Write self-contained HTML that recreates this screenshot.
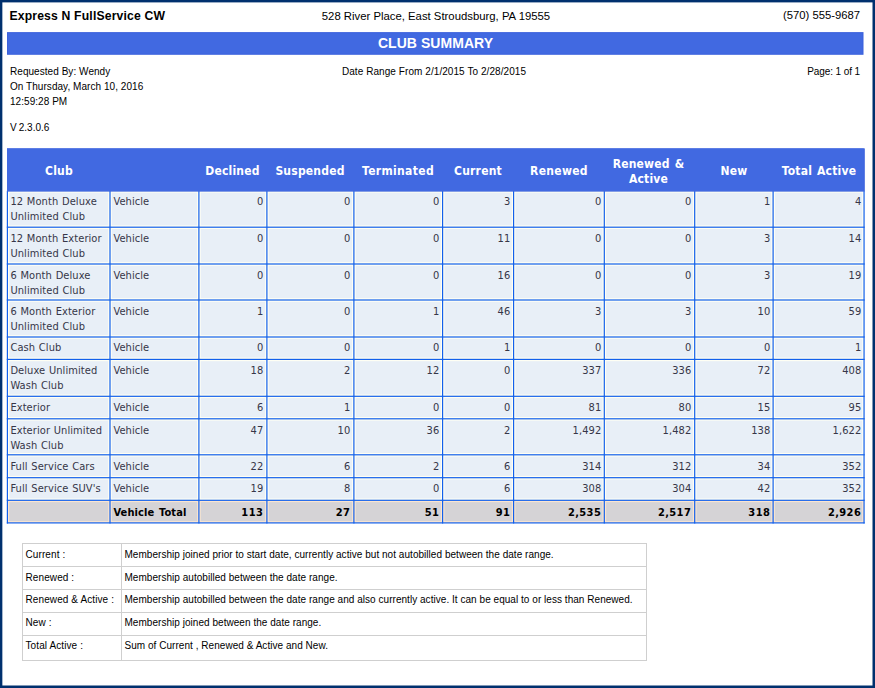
<!DOCTYPE html>
<html lang="en">
<head>
<meta charset="utf-8">
<title>Club Summary</title>
<style>
html,body{margin:0;padding:0;background:#fff;}
body{width:875px;height:688px;position:relative;overflow:hidden;font-family:"Liberation Sans",sans-serif;color:#000;}
#bg{position:absolute;left:0;top:0;width:875px;height:688px;}
.abs{position:absolute;white-space:nowrap;}
#title{left:9.4px;top:9px;font-weight:bold;font-size:12.2px;line-height:15px;letter-spacing:0.17px;}
#addr{left:236px;width:400px;top:9px;text-align:center;font-size:11.33px;line-height:15px;}
#phone{right:15px;top:8px;text-align:right;font-size:11.28px;line-height:15px;}
#bar{left:7px;top:33px;width:857px;height:22px;color:#fff;text-align:center;font-weight:bold;font-size:14px;line-height:20px;letter-spacing:0.05px;}
.sm{font-size:10px;line-height:15px;}
#req{left:10px;top:64px;letter-spacing:0.05px;}
#ver{left:10px;top:120px;word-spacing:-0.7px;}
#range{left:234px;width:400px;top:64px;text-align:center;letter-spacing:0.07px;}
#page{right:15px;top:64px;text-align:right;letter-spacing:-0.1px;}
.th{position:absolute;top:150px;height:43px;display:flex;align-items:center;justify-content:center;text-align:center;color:#fff;font-family:"DejaVu Sans Condensed","DejaVu Sans",sans-serif;font-weight:bold;font-size:12px;line-height:15px;letter-spacing:0.2px;word-spacing:1px;}
.c{position:absolute;box-sizing:border-box;font-family:"DejaVu Sans Condensed","DejaVu Sans",sans-serif;font-size:11px;line-height:15px;letter-spacing:0.08px;word-spacing:0.5px;color:#363648;padding:3px 3.7px 0 3.4px;white-space:nowrap;overflow:hidden;}
.n{text-align:right;}
.g{display:contents;}
.t{font-weight:bold;font-size:11px;letter-spacing:0.12px;word-spacing:1px;color:#000;}
.t.n{letter-spacing:0.4px;padding-right:3.8px;}
.l{position:absolute;box-sizing:border-box;border:1px solid #cfcfcf;background:#fff;font-size:10px;line-height:15px;padding:3px 0 0 2.5px;white-space:nowrap;overflow:hidden;color:#000;}
</style>
</head>
<body>
<svg id="bg" width="875" height="688" viewBox="0 0 875 688">
<rect x="7.00" y="32.10" width="856.50" height="22.70" fill="#3b61dc"/>
<rect x="8.00" y="33.10" width="854.50" height="20.70" fill="#4169e1"/>
<rect x="7.40" y="190.80" width="856.65" height="309.50" fill="#fffff4"/>
<rect x="7.40" y="500.30" width="856.65" height="22.60" fill="#fbe5cf"/>
<rect x="9.20" y="192.60" width="99.00" height="32.80" fill="#e8eff7"/>
<rect x="111.80" y="192.60" width="85.30" height="32.80" fill="#e8eff7"/>
<rect x="200.70" y="192.60" width="64.40" height="32.80" fill="#e8eff7"/>
<rect x="268.70" y="192.60" width="83.40" height="32.80" fill="#e8eff7"/>
<rect x="355.70" y="192.60" width="85.10" height="32.80" fill="#e8eff7"/>
<rect x="444.40" y="192.60" width="67.40" height="32.80" fill="#e8eff7"/>
<rect x="515.40" y="192.60" width="87.10" height="32.80" fill="#e8eff7"/>
<rect x="606.10" y="192.60" width="86.80" height="32.80" fill="#e8eff7"/>
<rect x="696.50" y="192.60" width="74.80" height="32.80" fill="#e8eff7"/>
<rect x="774.90" y="192.60" width="87.35" height="32.80" fill="#e8eff7"/>
<rect x="9.20" y="229.00" width="99.00" height="33.20" fill="#e8eff7"/>
<rect x="111.80" y="229.00" width="85.30" height="33.20" fill="#e8eff7"/>
<rect x="200.70" y="229.00" width="64.40" height="33.20" fill="#e8eff7"/>
<rect x="268.70" y="229.00" width="83.40" height="33.20" fill="#e8eff7"/>
<rect x="355.70" y="229.00" width="85.10" height="33.20" fill="#e8eff7"/>
<rect x="444.40" y="229.00" width="67.40" height="33.20" fill="#e8eff7"/>
<rect x="515.40" y="229.00" width="87.10" height="33.20" fill="#e8eff7"/>
<rect x="606.10" y="229.00" width="86.80" height="33.20" fill="#e8eff7"/>
<rect x="696.50" y="229.00" width="74.80" height="33.20" fill="#e8eff7"/>
<rect x="774.90" y="229.00" width="87.35" height="33.20" fill="#e8eff7"/>
<rect x="9.20" y="265.80" width="99.00" height="32.40" fill="#e8eff7"/>
<rect x="111.80" y="265.80" width="85.30" height="32.40" fill="#e8eff7"/>
<rect x="200.70" y="265.80" width="64.40" height="32.40" fill="#e8eff7"/>
<rect x="268.70" y="265.80" width="83.40" height="32.40" fill="#e8eff7"/>
<rect x="355.70" y="265.80" width="85.10" height="32.40" fill="#e8eff7"/>
<rect x="444.40" y="265.80" width="67.40" height="32.40" fill="#e8eff7"/>
<rect x="515.40" y="265.80" width="87.10" height="32.40" fill="#e8eff7"/>
<rect x="606.10" y="265.80" width="86.80" height="32.40" fill="#e8eff7"/>
<rect x="696.50" y="265.80" width="74.80" height="32.40" fill="#e8eff7"/>
<rect x="774.90" y="265.80" width="87.35" height="32.40" fill="#e8eff7"/>
<rect x="9.20" y="301.80" width="99.00" height="33.40" fill="#e8eff7"/>
<rect x="111.80" y="301.80" width="85.30" height="33.40" fill="#e8eff7"/>
<rect x="200.70" y="301.80" width="64.40" height="33.40" fill="#e8eff7"/>
<rect x="268.70" y="301.80" width="83.40" height="33.40" fill="#e8eff7"/>
<rect x="355.70" y="301.80" width="85.10" height="33.40" fill="#e8eff7"/>
<rect x="444.40" y="301.80" width="67.40" height="33.40" fill="#e8eff7"/>
<rect x="515.40" y="301.80" width="87.10" height="33.40" fill="#e8eff7"/>
<rect x="606.10" y="301.80" width="86.80" height="33.40" fill="#e8eff7"/>
<rect x="696.50" y="301.80" width="74.80" height="33.40" fill="#e8eff7"/>
<rect x="774.90" y="301.80" width="87.35" height="33.40" fill="#e8eff7"/>
<rect x="9.20" y="338.80" width="99.00" height="18.80" fill="#e8eff7"/>
<rect x="111.80" y="338.80" width="85.30" height="18.80" fill="#e8eff7"/>
<rect x="200.70" y="338.80" width="64.40" height="18.80" fill="#e8eff7"/>
<rect x="268.70" y="338.80" width="83.40" height="18.80" fill="#e8eff7"/>
<rect x="355.70" y="338.80" width="85.10" height="18.80" fill="#e8eff7"/>
<rect x="444.40" y="338.80" width="67.40" height="18.80" fill="#e8eff7"/>
<rect x="515.40" y="338.80" width="87.10" height="18.80" fill="#e8eff7"/>
<rect x="606.10" y="338.80" width="86.80" height="18.80" fill="#e8eff7"/>
<rect x="696.50" y="338.80" width="74.80" height="18.80" fill="#e8eff7"/>
<rect x="774.90" y="338.80" width="87.35" height="18.80" fill="#e8eff7"/>
<rect x="9.20" y="361.20" width="99.00" height="33.30" fill="#e8eff7"/>
<rect x="111.80" y="361.20" width="85.30" height="33.30" fill="#e8eff7"/>
<rect x="200.70" y="361.20" width="64.40" height="33.30" fill="#e8eff7"/>
<rect x="268.70" y="361.20" width="83.40" height="33.30" fill="#e8eff7"/>
<rect x="355.70" y="361.20" width="85.10" height="33.30" fill="#e8eff7"/>
<rect x="444.40" y="361.20" width="67.40" height="33.30" fill="#e8eff7"/>
<rect x="515.40" y="361.20" width="87.10" height="33.30" fill="#e8eff7"/>
<rect x="606.10" y="361.20" width="86.80" height="33.30" fill="#e8eff7"/>
<rect x="696.50" y="361.20" width="74.80" height="33.30" fill="#e8eff7"/>
<rect x="774.90" y="361.20" width="87.35" height="33.30" fill="#e8eff7"/>
<rect x="9.20" y="398.10" width="99.00" height="18.90" fill="#e8eff7"/>
<rect x="111.80" y="398.10" width="85.30" height="18.90" fill="#e8eff7"/>
<rect x="200.70" y="398.10" width="64.40" height="18.90" fill="#e8eff7"/>
<rect x="268.70" y="398.10" width="83.40" height="18.90" fill="#e8eff7"/>
<rect x="355.70" y="398.10" width="85.10" height="18.90" fill="#e8eff7"/>
<rect x="444.40" y="398.10" width="67.40" height="18.90" fill="#e8eff7"/>
<rect x="515.40" y="398.10" width="87.10" height="18.90" fill="#e8eff7"/>
<rect x="606.10" y="398.10" width="86.80" height="18.90" fill="#e8eff7"/>
<rect x="696.50" y="398.10" width="74.80" height="18.90" fill="#e8eff7"/>
<rect x="774.90" y="398.10" width="87.35" height="18.90" fill="#e8eff7"/>
<rect x="9.20" y="420.60" width="99.00" height="32.40" fill="#e8eff7"/>
<rect x="111.80" y="420.60" width="85.30" height="32.40" fill="#e8eff7"/>
<rect x="200.70" y="420.60" width="64.40" height="32.40" fill="#e8eff7"/>
<rect x="268.70" y="420.60" width="83.40" height="32.40" fill="#e8eff7"/>
<rect x="355.70" y="420.60" width="85.10" height="32.40" fill="#e8eff7"/>
<rect x="444.40" y="420.60" width="67.40" height="32.40" fill="#e8eff7"/>
<rect x="515.40" y="420.60" width="87.10" height="32.40" fill="#e8eff7"/>
<rect x="606.10" y="420.60" width="86.80" height="32.40" fill="#e8eff7"/>
<rect x="696.50" y="420.60" width="74.80" height="32.40" fill="#e8eff7"/>
<rect x="774.90" y="420.60" width="87.35" height="32.40" fill="#e8eff7"/>
<rect x="9.20" y="456.60" width="99.00" height="19.30" fill="#e8eff7"/>
<rect x="111.80" y="456.60" width="85.30" height="19.30" fill="#e8eff7"/>
<rect x="200.70" y="456.60" width="64.40" height="19.30" fill="#e8eff7"/>
<rect x="268.70" y="456.60" width="83.40" height="19.30" fill="#e8eff7"/>
<rect x="355.70" y="456.60" width="85.10" height="19.30" fill="#e8eff7"/>
<rect x="444.40" y="456.60" width="67.40" height="19.30" fill="#e8eff7"/>
<rect x="515.40" y="456.60" width="87.10" height="19.30" fill="#e8eff7"/>
<rect x="606.10" y="456.60" width="86.80" height="19.30" fill="#e8eff7"/>
<rect x="696.50" y="456.60" width="74.80" height="19.30" fill="#e8eff7"/>
<rect x="774.90" y="456.60" width="87.35" height="19.30" fill="#e8eff7"/>
<rect x="9.20" y="479.50" width="99.00" height="19.00" fill="#e8eff7"/>
<rect x="111.80" y="479.50" width="85.30" height="19.00" fill="#e8eff7"/>
<rect x="200.70" y="479.50" width="64.40" height="19.00" fill="#e8eff7"/>
<rect x="268.70" y="479.50" width="83.40" height="19.00" fill="#e8eff7"/>
<rect x="355.70" y="479.50" width="85.10" height="19.00" fill="#e8eff7"/>
<rect x="444.40" y="479.50" width="67.40" height="19.00" fill="#e8eff7"/>
<rect x="515.40" y="479.50" width="87.10" height="19.00" fill="#e8eff7"/>
<rect x="606.10" y="479.50" width="86.80" height="19.00" fill="#e8eff7"/>
<rect x="696.50" y="479.50" width="74.80" height="19.00" fill="#e8eff7"/>
<rect x="774.90" y="479.50" width="87.35" height="19.00" fill="#e8eff7"/>
<rect x="9.20" y="502.10" width="99.00" height="19.00" fill="#d5d3d6"/>
<rect x="111.80" y="502.10" width="85.30" height="19.00" fill="#d5d3d6"/>
<rect x="200.70" y="502.10" width="64.40" height="19.00" fill="#d5d3d6"/>
<rect x="268.70" y="502.10" width="83.40" height="19.00" fill="#d5d3d6"/>
<rect x="355.70" y="502.10" width="85.10" height="19.00" fill="#d5d3d6"/>
<rect x="444.40" y="502.10" width="67.40" height="19.00" fill="#d5d3d6"/>
<rect x="515.40" y="502.10" width="87.10" height="19.00" fill="#d5d3d6"/>
<rect x="606.10" y="502.10" width="86.80" height="19.00" fill="#d5d3d6"/>
<rect x="696.50" y="502.10" width="74.80" height="19.00" fill="#d5d3d6"/>
<rect x="774.90" y="502.10" width="87.35" height="19.00" fill="#d5d3d6"/>
<rect x="6.80" y="190.80" width="1.20" height="332.70" fill="#1260ec"/>
<rect x="109.40" y="190.80" width="1.20" height="332.70" fill="#1260ec"/>
<rect x="198.30" y="190.80" width="1.20" height="332.70" fill="#1260ec"/>
<rect x="266.30" y="190.80" width="1.20" height="332.70" fill="#1260ec"/>
<rect x="353.30" y="190.80" width="1.20" height="332.70" fill="#1260ec"/>
<rect x="442.00" y="190.80" width="1.20" height="332.70" fill="#1260ec"/>
<rect x="513.00" y="190.80" width="1.20" height="332.70" fill="#1260ec"/>
<rect x="603.70" y="190.80" width="1.20" height="332.70" fill="#1260ec"/>
<rect x="694.10" y="190.80" width="1.20" height="332.70" fill="#1260ec"/>
<rect x="772.50" y="190.80" width="1.20" height="332.70" fill="#1260ec"/>
<rect x="863.45" y="190.80" width="1.20" height="332.70" fill="#1260ec"/>
<rect x="6.80" y="226.60" width="857.85" height="1.20" fill="#1260ec"/>
<rect x="6.80" y="263.40" width="857.85" height="1.20" fill="#1260ec"/>
<rect x="6.80" y="299.40" width="857.85" height="1.20" fill="#1260ec"/>
<rect x="6.80" y="336.40" width="857.85" height="1.20" fill="#1260ec"/>
<rect x="6.80" y="358.80" width="857.85" height="1.20" fill="#1260ec"/>
<rect x="6.80" y="395.70" width="857.85" height="1.20" fill="#1260ec"/>
<rect x="6.80" y="418.20" width="857.85" height="1.20" fill="#1260ec"/>
<rect x="6.80" y="454.20" width="857.85" height="1.20" fill="#1260ec"/>
<rect x="6.80" y="477.10" width="857.85" height="1.20" fill="#1260ec"/>
<rect x="6.80" y="499.70" width="857.85" height="1.20" fill="#1260ec"/>
<rect x="6.80" y="522.30" width="857.85" height="1.20" fill="#1260ec"/>
<rect x="7.00" y="148.40" width="857.80" height="43.00" fill="#3b61dc"/>
<rect x="7.00" y="148.40" width="856.80" height="43.00" fill="#4169e1"/>
<rect x="0.00" y="0.00" width="875.00" height="2.40" fill="#00306e"/>
<rect x="0.00" y="685.50" width="875.00" height="2.50" fill="#00306e"/>
<rect x="0.00" y="0.00" width="2.35" height="688.00" fill="#00306e"/>
<rect x="872.50" y="0.00" width="2.50" height="688.00" fill="#00306e"/>
</svg>
<div class="abs" id="title">Express N FullService CW</div>
<div class="abs" id="addr">528 River Place, East Stroudsburg, PA 19555</div>
<div class="abs" id="phone">(570) 555-9687</div>
<div class="abs" id="bar">CLUB SUMMARY</div>
<div class="abs sm" id="req">Requested By: Wendy<br>On Thursday, March 10, 2016<br>12:59:28 PM</div>
<div class="abs sm" id="ver">V 2.3.0.6</div>
<div class="abs sm" id="range">Date Range From 2/1/2015 To 2/28/2015</div>
<div class="abs sm" id="page">Page: 1 of 1</div>
<div class="g" role="table" aria-label="Club Summary"><div class="g" role="row">
<div class="th" role="columnheader" style="left:7px;width:104px">Club</div>
<div class="th" role="columnheader" style="left:198px;width:69px">Declined</div>
<div class="th" role="columnheader" style="left:266px;width:88px">Suspended</div>
<div class="th" role="columnheader" style="left:353px;width:90px;letter-spacing:0.34px">Terminated</div>
<div class="th" role="columnheader" style="left:442px;width:72px">Current</div>
<div class="th" role="columnheader" style="left:513px;width:92px;letter-spacing:0.3px">Renewed</div>
<div class="th" role="columnheader" style="left:604px;width:91px;padding-right:2px;box-sizing:border-box">Renewed &<br>Active</div>
<div class="th" role="columnheader" style="left:694px;width:80px">New</div>
<div class="th" role="columnheader" style="left:773px;width:92px">Total Active</div>
</div>
<div class="g" role="row">
<div class="c " role="cell" style="left:7px;top:190px;width:104px;height:38px;padding-top:4px">12 Month Deluxe<br>Unlimited Club</div>
<div class="c " role="cell" style="left:110px;top:190px;width:89px;height:38px;padding-top:4px">Vehicle</div>
<div class="c n" role="cell" style="left:198px;top:190px;width:69px;height:38px;padding-top:4px">0</div>
<div class="c n" role="cell" style="left:266px;top:190px;width:88px;height:38px;padding-top:4px">0</div>
<div class="c n" role="cell" style="left:353px;top:190px;width:90px;height:38px;padding-top:4px">0</div>
<div class="c n" role="cell" style="left:442px;top:190px;width:72px;height:38px;padding-top:4px">3</div>
<div class="c n" role="cell" style="left:513px;top:190px;width:92px;height:38px;padding-top:4px">0</div>
<div class="c n" role="cell" style="left:604px;top:190px;width:91px;height:38px;padding-top:4px">0</div>
<div class="c n" role="cell" style="left:694px;top:190px;width:80px;height:38px;padding-top:4px">1</div>
<div class="c n" role="cell" style="left:773px;top:190px;width:92px;height:38px;padding-top:4px">4</div>
</div>
<div class="g" role="row">
<div class="c " role="cell" style="left:7px;top:227px;width:104px;height:38px;padding-top:4px">12 Month Exterior<br>Unlimited Club</div>
<div class="c " role="cell" style="left:110px;top:227px;width:89px;height:38px;padding-top:4px">Vehicle</div>
<div class="c n" role="cell" style="left:198px;top:227px;width:69px;height:38px;padding-top:4px">0</div>
<div class="c n" role="cell" style="left:266px;top:227px;width:88px;height:38px;padding-top:4px">0</div>
<div class="c n" role="cell" style="left:353px;top:227px;width:90px;height:38px;padding-top:4px">0</div>
<div class="c n" role="cell" style="left:442px;top:227px;width:72px;height:38px;padding-top:4px">11</div>
<div class="c n" role="cell" style="left:513px;top:227px;width:92px;height:38px;padding-top:4px">0</div>
<div class="c n" role="cell" style="left:604px;top:227px;width:91px;height:38px;padding-top:4px">0</div>
<div class="c n" role="cell" style="left:694px;top:227px;width:80px;height:38px;padding-top:4px">3</div>
<div class="c n" role="cell" style="left:773px;top:227px;width:92px;height:38px;padding-top:4px">14</div>
</div>
<div class="g" role="row">
<div class="c " role="cell" style="left:7px;top:264px;width:104px;height:37px;padding-top:4px">6 Month Deluxe<br>Unlimited Club</div>
<div class="c " role="cell" style="left:110px;top:264px;width:89px;height:37px;padding-top:4px">Vehicle</div>
<div class="c n" role="cell" style="left:198px;top:264px;width:69px;height:37px;padding-top:4px">0</div>
<div class="c n" role="cell" style="left:266px;top:264px;width:88px;height:37px;padding-top:4px">0</div>
<div class="c n" role="cell" style="left:353px;top:264px;width:90px;height:37px;padding-top:4px">0</div>
<div class="c n" role="cell" style="left:442px;top:264px;width:72px;height:37px;padding-top:4px">16</div>
<div class="c n" role="cell" style="left:513px;top:264px;width:92px;height:37px;padding-top:4px">0</div>
<div class="c n" role="cell" style="left:604px;top:264px;width:91px;height:37px;padding-top:4px">0</div>
<div class="c n" role="cell" style="left:694px;top:264px;width:80px;height:37px;padding-top:4px">3</div>
<div class="c n" role="cell" style="left:773px;top:264px;width:92px;height:37px;padding-top:4px">19</div>
</div>
<div class="g" role="row">
<div class="c " role="cell" style="left:7px;top:300px;width:104px;height:37px;padding-top:4px">6 Month Exterior<br>Unlimited Club</div>
<div class="c " role="cell" style="left:110px;top:300px;width:89px;height:37px;padding-top:4px">Vehicle</div>
<div class="c n" role="cell" style="left:198px;top:300px;width:69px;height:37px;padding-top:4px">1</div>
<div class="c n" role="cell" style="left:266px;top:300px;width:88px;height:37px;padding-top:4px">0</div>
<div class="c n" role="cell" style="left:353px;top:300px;width:90px;height:37px;padding-top:4px">1</div>
<div class="c n" role="cell" style="left:442px;top:300px;width:72px;height:37px;padding-top:4px">46</div>
<div class="c n" role="cell" style="left:513px;top:300px;width:92px;height:37px;padding-top:4px">3</div>
<div class="c n" role="cell" style="left:604px;top:300px;width:91px;height:37px;padding-top:4px">3</div>
<div class="c n" role="cell" style="left:694px;top:300px;width:80px;height:37px;padding-top:4px">10</div>
<div class="c n" role="cell" style="left:773px;top:300px;width:92px;height:37px;padding-top:4px">59</div>
</div>
<div class="g" role="row">
<div class="c " role="cell" style="left:7px;top:336px;width:104px;height:24px;padding-top:4px">Cash Club</div>
<div class="c " role="cell" style="left:110px;top:336px;width:89px;height:24px;padding-top:4px">Vehicle</div>
<div class="c n" role="cell" style="left:198px;top:336px;width:69px;height:24px;padding-top:4px">0</div>
<div class="c n" role="cell" style="left:266px;top:336px;width:88px;height:24px;padding-top:4px">0</div>
<div class="c n" role="cell" style="left:353px;top:336px;width:90px;height:24px;padding-top:4px">0</div>
<div class="c n" role="cell" style="left:442px;top:336px;width:72px;height:24px;padding-top:4px">1</div>
<div class="c n" role="cell" style="left:513px;top:336px;width:92px;height:24px;padding-top:4px">0</div>
<div class="c n" role="cell" style="left:604px;top:336px;width:91px;height:24px;padding-top:4px">0</div>
<div class="c n" role="cell" style="left:694px;top:336px;width:80px;height:24px;padding-top:4px">0</div>
<div class="c n" role="cell" style="left:773px;top:336px;width:92px;height:24px;padding-top:4px">1</div>
</div>
<div class="g" role="row">
<div class="c " role="cell" style="left:7px;top:359px;width:104px;height:38px;padding-top:4px">Deluxe Unlimited<br>Wash Club</div>
<div class="c " role="cell" style="left:110px;top:359px;width:89px;height:38px;padding-top:4px">Vehicle</div>
<div class="c n" role="cell" style="left:198px;top:359px;width:69px;height:38px;padding-top:4px">18</div>
<div class="c n" role="cell" style="left:266px;top:359px;width:88px;height:38px;padding-top:4px">2</div>
<div class="c n" role="cell" style="left:353px;top:359px;width:90px;height:38px;padding-top:4px">12</div>
<div class="c n" role="cell" style="left:442px;top:359px;width:72px;height:38px;padding-top:4px">0</div>
<div class="c n" role="cell" style="left:513px;top:359px;width:92px;height:38px;padding-top:4px">337</div>
<div class="c n" role="cell" style="left:604px;top:359px;width:91px;height:38px;padding-top:4px">336</div>
<div class="c n" role="cell" style="left:694px;top:359px;width:80px;height:38px;padding-top:4px">72</div>
<div class="c n" role="cell" style="left:773px;top:359px;width:92px;height:38px;padding-top:4px">408</div>
</div>
<div class="g" role="row">
<div class="c " role="cell" style="left:7px;top:396px;width:104px;height:23px;padding-top:4px">Exterior</div>
<div class="c " role="cell" style="left:110px;top:396px;width:89px;height:23px;padding-top:4px">Vehicle</div>
<div class="c n" role="cell" style="left:198px;top:396px;width:69px;height:23px;padding-top:4px">6</div>
<div class="c n" role="cell" style="left:266px;top:396px;width:88px;height:23px;padding-top:4px">1</div>
<div class="c n" role="cell" style="left:353px;top:396px;width:90px;height:23px;padding-top:4px">0</div>
<div class="c n" role="cell" style="left:442px;top:396px;width:72px;height:23px;padding-top:4px">0</div>
<div class="c n" role="cell" style="left:513px;top:396px;width:92px;height:23px;padding-top:4px">81</div>
<div class="c n" role="cell" style="left:604px;top:396px;width:91px;height:23px;padding-top:4px">80</div>
<div class="c n" role="cell" style="left:694px;top:396px;width:80px;height:23px;padding-top:4px">15</div>
<div class="c n" role="cell" style="left:773px;top:396px;width:92px;height:23px;padding-top:4px">95</div>
</div>
<div class="g" role="row">
<div class="c " role="cell" style="left:7px;top:418px;width:104px;height:38px;padding-top:5px">Exterior Unlimited<br>Wash Club</div>
<div class="c " role="cell" style="left:110px;top:418px;width:89px;height:38px;padding-top:5px">Vehicle</div>
<div class="c n" role="cell" style="left:198px;top:418px;width:69px;height:38px;padding-top:5px">47</div>
<div class="c n" role="cell" style="left:266px;top:418px;width:88px;height:38px;padding-top:5px">10</div>
<div class="c n" role="cell" style="left:353px;top:418px;width:90px;height:38px;padding-top:5px">36</div>
<div class="c n" role="cell" style="left:442px;top:418px;width:72px;height:38px;padding-top:5px">2</div>
<div class="c n" role="cell" style="left:513px;top:418px;width:92px;height:38px;padding-top:5px">1,492</div>
<div class="c n" role="cell" style="left:604px;top:418px;width:91px;height:38px;padding-top:5px">1,482</div>
<div class="c n" role="cell" style="left:694px;top:418px;width:80px;height:38px;padding-top:5px">138</div>
<div class="c n" role="cell" style="left:773px;top:418px;width:92px;height:38px;padding-top:5px">1,622</div>
</div>
<div class="g" role="row">
<div class="c " role="cell" style="left:7px;top:455px;width:104px;height:23px;padding-top:4px">Full Service Cars</div>
<div class="c " role="cell" style="left:110px;top:455px;width:89px;height:23px;padding-top:4px">Vehicle</div>
<div class="c n" role="cell" style="left:198px;top:455px;width:69px;height:23px;padding-top:4px">22</div>
<div class="c n" role="cell" style="left:266px;top:455px;width:88px;height:23px;padding-top:4px">6</div>
<div class="c n" role="cell" style="left:353px;top:455px;width:90px;height:23px;padding-top:4px">2</div>
<div class="c n" role="cell" style="left:442px;top:455px;width:72px;height:23px;padding-top:4px">6</div>
<div class="c n" role="cell" style="left:513px;top:455px;width:92px;height:23px;padding-top:4px">314</div>
<div class="c n" role="cell" style="left:604px;top:455px;width:91px;height:23px;padding-top:4px">312</div>
<div class="c n" role="cell" style="left:694px;top:455px;width:80px;height:23px;padding-top:4px">34</div>
<div class="c n" role="cell" style="left:773px;top:455px;width:92px;height:23px;padding-top:4px">352</div>
</div>
<div class="g" role="row">
<div class="c " role="cell" style="left:7px;top:477px;width:104px;height:24px;padding-top:4px">Full Service SUV's</div>
<div class="c " role="cell" style="left:110px;top:477px;width:89px;height:24px;padding-top:4px">Vehicle</div>
<div class="c n" role="cell" style="left:198px;top:477px;width:69px;height:24px;padding-top:4px">19</div>
<div class="c n" role="cell" style="left:266px;top:477px;width:88px;height:24px;padding-top:4px">8</div>
<div class="c n" role="cell" style="left:353px;top:477px;width:90px;height:24px;padding-top:4px">0</div>
<div class="c n" role="cell" style="left:442px;top:477px;width:72px;height:24px;padding-top:4px">6</div>
<div class="c n" role="cell" style="left:513px;top:477px;width:92px;height:24px;padding-top:4px">308</div>
<div class="c n" role="cell" style="left:604px;top:477px;width:91px;height:24px;padding-top:4px">304</div>
<div class="c n" role="cell" style="left:694px;top:477px;width:80px;height:24px;padding-top:4px">42</div>
<div class="c n" role="cell" style="left:773px;top:477px;width:92px;height:24px;padding-top:4px">352</div>
</div>
<div class="g" role="row">
<div class="c t" role="cell" style="left:110px;top:500px;width:89px;height:23px;padding-top:5px">Vehicle Total</div>
<div class="c t n" role="cell" style="left:198px;top:500px;width:69px;height:23px;padding-top:5px">113</div>
<div class="c t n" role="cell" style="left:266px;top:500px;width:88px;height:23px;padding-top:5px">27</div>
<div class="c t n" role="cell" style="left:353px;top:500px;width:90px;height:23px;padding-top:5px">51</div>
<div class="c t n" role="cell" style="left:442px;top:500px;width:72px;height:23px;padding-top:5px">91</div>
<div class="c t n" role="cell" style="left:513px;top:500px;width:92px;height:23px;padding-top:5px">2,535</div>
<div class="c t n" role="cell" style="left:604px;top:500px;width:91px;height:23px;padding-top:5px">2,517</div>
<div class="c t n" role="cell" style="left:694px;top:500px;width:80px;height:23px;padding-top:5px">318</div>
<div class="c t n" role="cell" style="left:773px;top:500px;width:92px;height:23px;padding-top:5px">2,926</div>
</div></div>
<div class="g" role="table" aria-label="Legend">
<div class="g" role="row">
<div class="l" role="cell" style="left:22px;top:543px;width:100px;height:24px;padding-top:3px;letter-spacing:0.1px">Current :</div>
<div class="l" role="cell" style="left:121px;top:543px;width:526px;height:24px;padding-top:3px;letter-spacing:0.04px">Membership joined prior to start date, currently active but not autobilled between the date range.</div>
</div>
<div class="g" role="row">
<div class="l" role="cell" style="left:22px;top:566px;width:100px;height:24px;padding-top:3px;letter-spacing:0.1px">Renewed :</div>
<div class="l" role="cell" style="left:121px;top:566px;width:526px;height:24px;padding-top:3px;letter-spacing:0.04px">Membership autobilled between the date range.</div>
</div>
<div class="g" role="row">
<div class="l" role="cell" style="left:22px;top:589px;width:100px;height:24px;padding-top:2px;letter-spacing:0.1px">Renewed &amp; Active :</div>
<div class="l" role="cell" style="left:121px;top:589px;width:526px;height:24px;padding-top:2px;letter-spacing:0.04px">Membership autobilled between the date range and also currently active. It can be equal to or less than Renewed.</div>
</div>
<div class="g" role="row">
<div class="l" role="cell" style="left:22px;top:612px;width:100px;height:24px;padding-top:2px;letter-spacing:0.1px">New :</div>
<div class="l" role="cell" style="left:121px;top:612px;width:526px;height:24px;padding-top:2px;letter-spacing:0.04px">Membership joined between the date range.</div>
</div>
<div class="g" role="row">
<div class="l" role="cell" style="left:22px;top:635px;width:100px;height:26px;padding-top:2px;letter-spacing:0.1px">Total Active :</div>
<div class="l" role="cell" style="left:121px;top:635px;width:526px;height:26px;padding-top:2px;letter-spacing:0.04px">Sum of Current , Renewed &amp; Active and New.</div>
</div>
</div>
</body>
</html>
